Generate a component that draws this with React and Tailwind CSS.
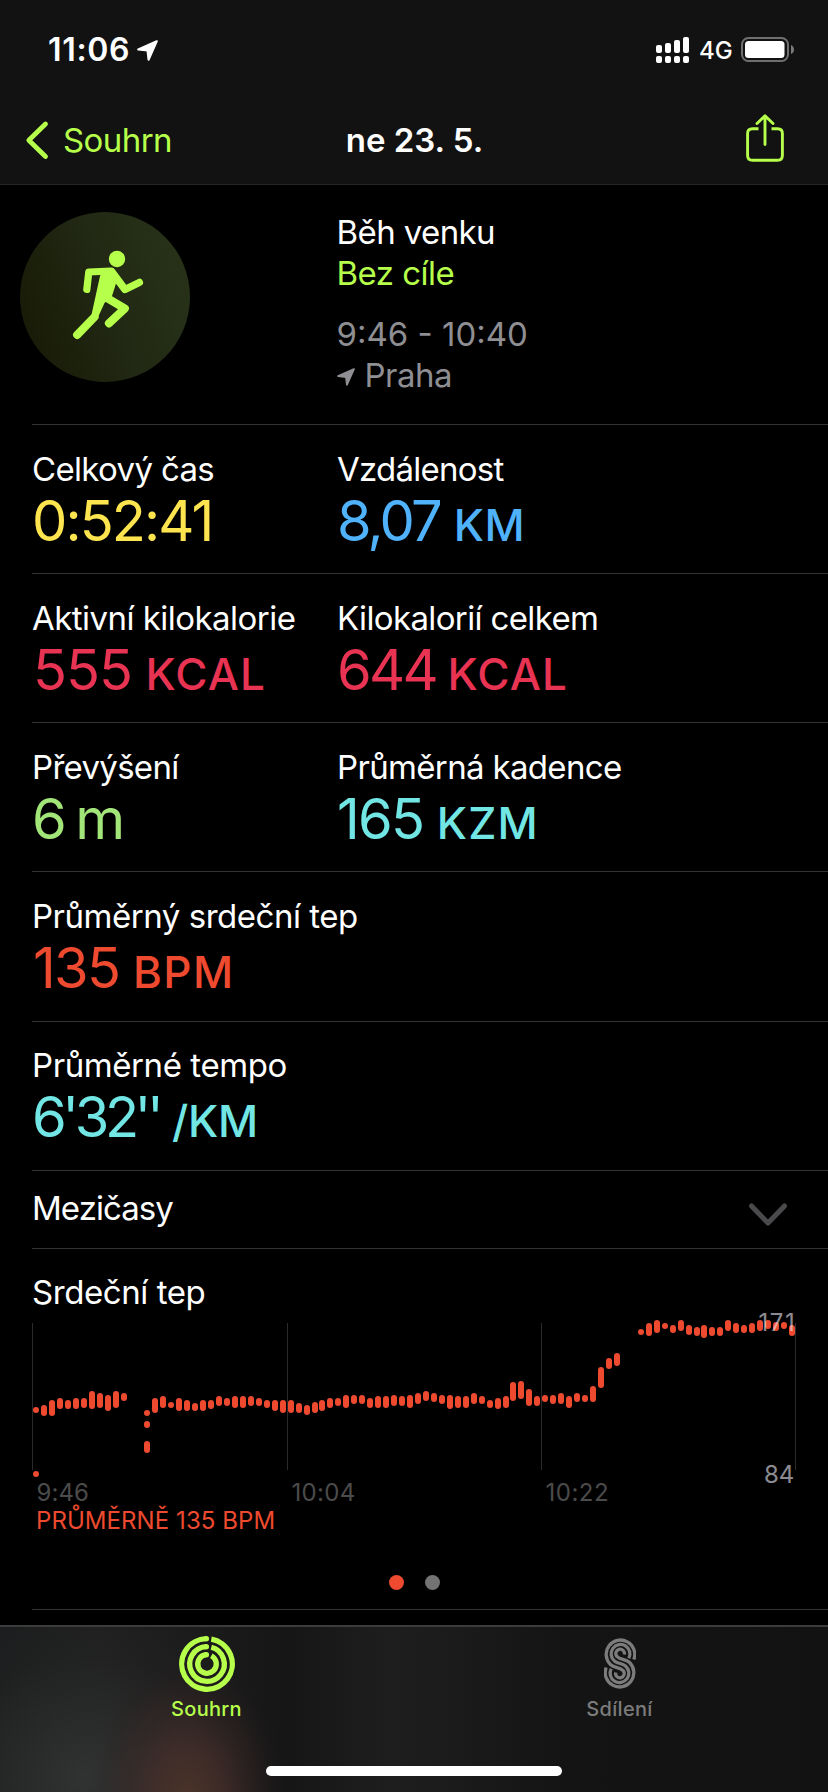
import React from "react";

const LABEL = "text-[33px] leading-[41px] whitespace-nowrap";

const ROWS = [
  [
    { label: "Celkový čas", ls: "tracking-[-0.66px]", value: "0:52:41", vs: "tracking-[-1.9px]", color: "text-[#fee550]" },
    { label: "Vzdálenost", ls: "tracking-[-0.75px]", value: "8,07", vs: "tracking-[-2.8px]", unit: "KM", us: "ml-[14px] tracking-[0.44px]", color: "text-[#4fb2fb]" },
  ],
  [
    { label: "Aktivní kilokalorie", ls: "tracking-[-0.53px]", value: "555", vs: "tracking-[-1.04px] ml-px", unit: "KCAL", us: "ml-[13.5px] tracking-[1.09px]", color: "text-[#e83352]" },
    { label: "Kilokalorií celkem", ls: "tracking-[-0.63px]", value: "644", vs: "tracking-[-2.7px]", unit: "KCAL", us: "ml-[11.5px] tracking-[1.09px]", color: "text-[#e83352]" },
  ],
  [
    { label: "Převýšení", ls: "tracking-[-0.7px]", value: "6", vs: "", unit: "m", big: true, us: "ml-[8.5px]", color: "text-[#a2e578]" },
    { label: "Průměrná kadence", ls: "tracking-[-0.66px]", value: "165", vs: "tracking-[-1.75px]", unit: "KZM", us: "ml-[13.5px] tracking-[1.13px]", color: "text-[#72e6e4]" },
  ],
  [
    { label: "Průměrný srdeční tep", ls: "tracking-[-0.47px]", value: "135", vs: "tracking-[-1.68px] ml-px", unit: "BPM", us: "ml-[13.5px] tracking-[1.5px]", color: "text-[#ed4a2f]" },
  ],
  [
    { label: "Průměrné tempo", ls: "tracking-[-0.42px]", value: "6'32''", vs: "tracking-[-4.41px]", unit: "/KM", us: "ml-[12.5px] tracking-[-0.2px]", color: "text-[#72e6e4]" },
  ],
];

const ROW_BOX = ["h-[149px] pt-6", "h-[149px] pt-6", "h-[149px] pt-6", "h-[150px] pt-6", "h-[149px] pt-[23px]"];

function Metric({ item }) {
  return (
    <div>
      <div className={`${LABEL} ${item.ls}`}>{item.label}</div>
      <div className={`flex items-baseline leading-[62px] font-[385] whitespace-nowrap ${item.color}`}>
        <span className={`text-[56px] ${item.vs}`}>{item.value}</span>
        {item.unit && (
          <span className={`${item.big ? "text-[57px]" : "text-[44px] font-[460]"} ${item.us}`}>{item.unit}</span>
        )}
      </div>
    </div>
  );
}

// Heart-rate ranges: [x, top, bottom], vertical values in thirds of a pixel.
const BEATS = [
  [36, 321, 339], [36, 513, 531], [44, 315, 348], [52, 300, 348], [60, 294, 327], [68, 300, 327], [76, 294, 327],
  [84, 294, 324], [92, 273, 327], [100, 279, 324], [108, 285, 333], [116, 273, 324], [124, 279, 303],
  [147, 330, 348], [147, 363, 384], [147, 423, 459], [155, 294, 339], [163, 288, 324], [171, 306, 324],
  [179, 294, 333], [187, 300, 333], [195, 309, 333], [203, 300, 333], [211, 300, 327], [219, 288, 318],
  [227, 294, 318], [235, 288, 324], [243, 288, 324], [251, 288, 318], [259, 294, 318], [267, 300, 324],
  [275, 300, 333], [283, 300, 339], [291, 300, 339], [299, 309, 339], [307, 315, 345], [315, 306, 339],
  [322, 300, 333], [330, 294, 324], [338, 294, 318], [346, 285, 324], [354, 285, 312], [362, 285, 312],
  [370, 294, 324], [378, 288, 324], [386, 288, 324], [394, 285, 318], [402, 288, 318], [410, 285, 324],
  [418, 279, 312], [426, 273, 303], [434, 279, 306], [442, 285, 312], [450, 285, 327], [458, 288, 324],
  [466, 288, 324], [474, 279, 312], [482, 288, 312], [490, 300, 324], [498, 294, 327], [506, 288, 324],
  [513, 246, 303], [521, 243, 297], [529, 267, 318], [537, 288, 318], [545, 285, 306], [553, 285, 312],
  [561, 279, 312], [569, 288, 324], [577, 279, 306], [585, 285, 306], [593, 258, 306], [601, 201, 264],
  [609, 174, 207], [617, 159, 198], [641, 87, 105], [649, 69, 108], [657, 60, 99], [665, 69, 87],
  [673, 75, 99], [681, 60, 93], [689, 75, 105], [697, 81, 108], [704, 75, 114], [712, 81, 108],
  [720, 81, 108], [728, 60, 93], [736, 69, 99], [744, 75, 99], [752, 69, 99], [760, 60, 93],
  [768, 60, 87], [776, 66, 93], [784, 66, 87], [792, 75, 108],
];

function HeartChart() {
  return (
    <svg className="-mt-[13px] -ml-8 block h-[240px] w-[828px]" viewBox="0 0 828 240" fontSize="24">
      {[32, 287, 541, 795].map((x) => (
        <rect key={x} x={x} y="23" width="1" height="147" fill="#2b2b2b" />
      ))}
      {BEATS.map(([x, a, b], i) => (
        <rect key={i} x={x - 3} y={a / 3} width="6" height={(b - a) / 3} rx="3" fill="#ed4a2f" />
      ))}
      <g fill="#4b4b4b">
        <text x="36.5" y="201" letterSpacing="0.1">9:46</text>
        <text x="291.5" y="201" letterSpacing="0.3">10:04</text>
        <text x="545.5" y="201" letterSpacing="0.5">10:22</text>
      </g>
      <g fill="rgba(235,235,245,0.6)">
        <text x="758.500" y="31" letterSpacing="1.6">171</text>
        <text x="764" y="183">84</text>
      </g>
      <text x="36" y="229" letterSpacing="0.07" fill="#ed4a2f">PRŮMĚRNĚ 135 BPM</text>
    </svg>
  );
}

function Arrow({ className }) {
  return (
    <svg className={className} viewBox="0 0 20 20" fill="currentColor" stroke="currentColor" strokeWidth="2" strokeLinejoin="round">
      <path d="M18.800 1.200 L1.200 9 L10 10 L11 18.800 Z" />
    </svg>
  );
}

function Runner() {
  return (
    <svg className="size-[170px]" viewBox="20 212 170 170" fill="none" stroke="#b6ff4b" strokeLinecap="round" strokeLinejoin="round">
      <circle cx="117" cy="259" r="8.2" fill="#b6ff4b" stroke="none" />
      <path d="M100 276 L103 268.5 L112 268 L116.500 282 L112 296 L104.500 303 L97 319.500 L91 317 Z" fill="#b6ff4b" stroke="none" />
      <path d="M86.800 289.500 L88.800 272 L111 271" strokeWidth="7.200" />
      <path d="M112 272 L125 289.500 L139.300 282.500" strokeWidth="7.500" />
      <path d="M107 298 L124.800 308.500 L109 323.300" strokeWidth="8.200" />
      <path d="M94.500 317 L77.200 334.800" strokeWidth="8.200" />
    </svg>
  );
}

function RingsIcon() {
  return (
    <svg className="size-[56px]" viewBox="-28 -28 56 56" fill="none" stroke="#b6ff4b" strokeWidth="5.300">
      <path d="M4.300 -24.930 A25.300 25.300 0 1 1 -0.600 -25.290" />
      <path d="M4.300 -16.760 A17.300 17.300 0 1 1 -0.600 -17.290" />
      <path d="M4.300 -8.250 A9.300 9.300 0 1 1 -0.600 -9.280" />
      <g fill="#b6ff4b" stroke="none">
        <circle cx="-0.600" cy="-25.300" r="2.650" />
        <circle cx="-0.600" cy="-17.300" r="2.650" />
        <circle cx="-0.600" cy="-9.300" r="2.650" />
      </g>
    </svg>
  );
}

function SharingIcon() {
  return (
    <svg className="h-[51px] w-[32px]" viewBox="-16 -25.5 32 51" fill="none" stroke="#7c7c7c" strokeWidth="3.300">
      <path d="M13.800 -4 A14.300 14.300 0 1 0 -9.600 1 C-5.500 4.700 0 3.500 3 7 A4.300 4.300 0 1 1 -4.300 9" />
      <path d="M8.800 -5.200 A9.400 9.400 0 1 0 -5.500 -2.400 C-1.500 0.500 2 -0.500 5.500 2.400 A9.400 9.400 0 1 1 -8.800 5.200" />
      <path d="M4.300 -9 A4.300 4.300 0 1 0 -3 -7 C0 -3.500 5.500 -4.700 9.600 -1 A14.300 14.300 0 1 1 -13.800 4" />
    </svg>
  );
}

const BARS = ["h-2", "h-[10px]", "h-[13px]", "h-4"];

export default function App() {
  return (
    <div className="flex h-[1792px] w-[828px] flex-col overflow-hidden bg-black font-['Inter',sans-serif] text-white">
      <header className="h-[185px] shrink-0 border-b border-[#262626] bg-[#121212]">
        <div className="flex h-[100px] items-start justify-between pr-[33px] pl-12">
          <div className="flex items-start pt-[30px]">
            <span className="text-[32px] leading-[40px] font-semibold tracking-[0.66px]">11:06</span>
            <Arrow className="mt-[9.5px] ml-[7px] size-[21px]" />
          </div>
          <div className="flex items-start pt-[37px]">
            <div className="flex h-[26px] gap-[3px]">
              {BARS.map((h) => (
                <div key={h} className="flex w-[6px] flex-col justify-end gap-[3px]">
                  <div className={`rounded-[2px] bg-white ${h}`} />
                  <div className="h-[7px] rounded-[2px] bg-white" />
                </div>
              ))}
            </div>
            <span className="-mt-px ml-[10px] w-[33px] text-[24px] leading-[30px] font-[450]">4G</span>
            <svg className="ml-[9px] h-[25px] w-[54px]" viewBox="0 0 54 25">
              <rect x="1" y="1" width="46" height="23" rx="6.500" fill="none" stroke="#6f6f6f" strokeWidth="2" />
              <rect x="4" y="4" width="39.500" height="17" rx="3.500" fill="#fff" />
              <path d="M50 8 Q53 9.500 53 12.500 Q53 15.500 50 17 Z" fill="#7a7a7a" />
            </svg>
          </div>
        </div>
        <div className="grid grid-cols-[1fr_auto_1fr] pt-[20px] text-[33px] leading-[40px]">
          <div className="flex text-[#b6ff4b]">
            <svg className="ml-[25px] h-[40px] w-[24px]" viewBox="0 0 24 40" fill="none" stroke="currentColor" strokeWidth="4.800" strokeLinecap="round" strokeLinejoin="round">
              <path d="M20.500 4 L3.800 20.200 L20.500 36.500" />
            </svg>
            <span className="ml-[14px] tracking-[-0.59px]">Souhrn</span>
          </div>
          <h1 className="pl-px font-semibold">ne 23. 5.</h1>
          <div className="flex justify-end pr-[44px]">
            <svg className="-mt-[6px] h-[49px] w-[38px]" viewBox="0 0 38 49" fill="none" stroke="#b6ff4b" strokeWidth="2.900" strokeLinecap="round" strokeLinejoin="round">
              <path d="M12.500 14.800 H6.500 Q1.600 14.800 1.600 19.500 V41.500 Q1.600 46.300 6.500 46.300 H31.500 Q36.400 46.300 36.400 41.500 V19.500 Q36.400 14.800 31.500 14.800 H25.500" strokeLinecap="butt" />
              <path d="M19 30.500 V2 M11 9.500 L19 1.800 L27 9.500" />
            </svg>
          </div>
        </div>
      </header>

      <main className="h-[1440px] shrink-0 overflow-hidden">
        <section className="flex h-[239px] pt-[27px] pl-5">
          <div className="size-[170px] rounded-full bg-[linear-gradient(70deg,#171a06_5%,#222914_55%,#283319_95%)]">
            <Runner />
          </div>
          <div className="ml-[146.5px] text-[33px] leading-[41px] whitespace-nowrap">
            <div className="tracking-[-0.6px]">Běh venku</div>
            <div className="tracking-[-0.53px] text-[#b6ff4b]">Bez cíle</div>
            <div className="mt-5 text-[#8e8e93]">9:46 - 10:40</div>
            <div className="flex items-center text-[#8e8e93]">
              <Arrow className="mt-[2px] size-[18px]" />
              <span className="ml-[10px] tracking-[-0.5px]">Praha</span>
            </div>
          </div>
        </section>

        <div className="ml-8">
          {ROWS.map((row, i) => (
            <section key={i} className={`grid grid-cols-[305px_1fr] border-t border-[#333] ${ROW_BOX[i]}`}>
              {row.map((item) => (
                <Metric key={item.label} item={item} />
              ))}
            </section>
          ))}
          <section className="flex h-[78px] justify-between border-t border-[#333] pt-[17px] pr-10">
            <span className={`${LABEL} tracking-[-0.95px]`}>Mezičasy</span>
            <svg className="mt-[13.5px] h-[26px] w-[40px]" viewBox="0 0 40 26" fill="none" stroke="#4a4a4c" strokeWidth="5" strokeLinecap="round" strokeLinejoin="round">
              <path d="M3.500 4 L20 21 L36.500 4" />
            </svg>
          </section>
          <section className="h-[361px] border-t border-[#333] pt-[23px]">
            <h2 className={`${LABEL} tracking-[-0.43px]`}>Srdeční tep</h2>
            <HeartChart />
            <div className="-ml-8 flex justify-center gap-[21px] pt-[35px] pl-px">
              <span className="size-[15px] rounded-full bg-[#ed4a2f]" />
              <span className="size-[15px] rounded-full bg-[#737373]" />
            </div>
          </section>
          <div className="border-t border-[#333]" />
        </div>
      </main>

      <nav className="flex h-[167px] shrink-0 flex-col items-center border-t-2 border-[#3c3c3c] bg-[radial-gradient(ellipse_100px_150px_at_188px_175px,#4f3529e6_0%,#4a302bb3_35%,#40292766_62%,#30202026_84%,transparent_100%),radial-gradient(ellipse_190px_170px_at_85px_150px,#323534e6_0%,#2c2e2da6_40%,#2426254d_72%,transparent_100%),linear-gradient(90deg,#1c1d1e_0%,#202020_12%,#1b1b1b_24%,#161616_35%,#1e1e1e_47%,#1b1b1b_55%,#141414_68%,#121212_100%)]">
        <div className="grid h-[139px] w-full grid-cols-2 pr-[2px] text-[20px] leading-6 font-medium">
          <div className="flex flex-col items-center pt-[9px] text-[#b6ff4b]">
            <RingsIcon />
            <span className="mt-[5px] tracking-[0.3px]">Souhrn</span>
          </div>
          <div className="flex flex-col items-center pt-[11px] text-[#7c7c7c]">
            <SharingIcon />
            <span className="mt-2 tracking-[0.3px]">Sdílení</span>
          </div>
        </div>
        <div className="h-[10px] w-[296px] rounded-full bg-white" />
      </nav>
    </div>
  );
}
